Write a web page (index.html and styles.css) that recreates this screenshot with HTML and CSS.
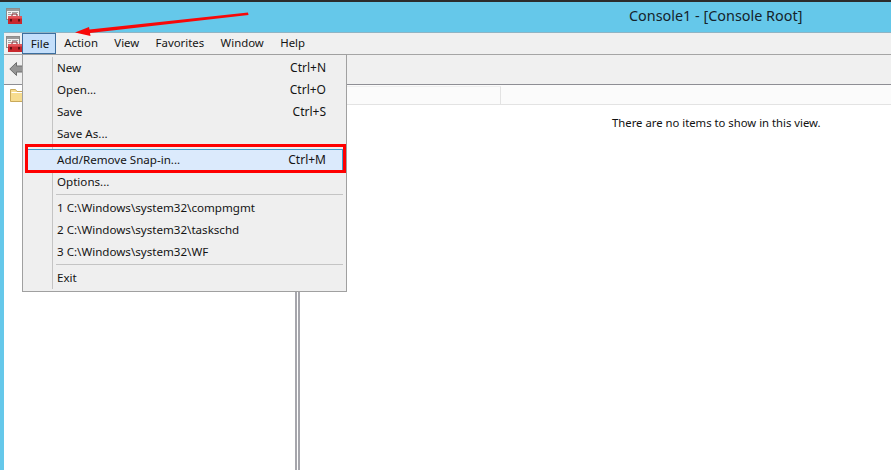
FILE: index.html
```html
<!DOCTYPE html>
<html lang="en">
<head>
<meta charset="utf-8">
<title>Console1 - [Console Root]</title>
<link rel="stylesheet" href="styles.css">
</head>
<body>
<svg width="0" height="0" class="defs">
  <symbol id="mmc" viewBox="0 0 16 16">
    <rect x="0.5" y="0.5" width="13" height="11" fill="#f4f4f4" stroke="#8b8b8b"/>
    <rect x="1" y="1" width="12" height="2" fill="#9a9a9a"/>
    <path d="M2 4.500h3M6 4.500h6M2 6.500h3" stroke="#a5a5a5"/>
    <path d="M6 8V6h5v2" fill="none" stroke="#7d1f24"/>
    <rect x="2" y="8" width="14" height="8" fill="#c8282e"/>
    <rect x="2" y="8" width="14" height="2.500" fill="#e2555a"/>
    <rect x="4" y="11" width="2" height="2.500" fill="#5f1114"/>
    <rect x="12" y="11" width="2" height="2.500" fill="#5f1114"/>
  </symbol>
</svg>
<div class="window">
  <header class="titlebar">
    <svg class="app-icon"><use href="#mmc"/></svg>
    <span class="title">Console1 - [Console Root]</span>
  </header>
  <div class="main">
    <nav class="menubar">
      <svg class="app-icon"><use href="#mmc"/></svg>
      <span class="menu-item active">File</span>
      <span class="menu-item">Action</span>
      <span class="menu-item">View</span>
      <span class="menu-item">Favorites</span>
      <span class="menu-item">Window</span>
      <span class="menu-item">Help</span>
    </nav>
    <div class="toolbar">
      <svg class="back" width="14" height="14" viewBox="0 0 14 14"><path d="M7.500 .5 .8 7l6.700 6.500V10H14V4H7.500z" fill="#959595" stroke="#6e6e6e"/></svg>
    </div>
    <div class="panes">
      <div class="tree">
        <svg width="14" height="14" viewBox="0 0 14 14"><path d="M.5 13.500V1.500h5l1.500 2h6.500v10z" fill="#f7dc8f" stroke="#c9a95a"/><path d="M1.500 4.500h11" stroke="#fff"/></svg>
      </div>
      <div class="divider"></div>
      <div class="content">
        <div class="tabstrip"><div class="tab"></div></div>
        <p class="empty">There are no items to show in this view.</p>
      </div>
    </div>
  </div>
</div>
<div class="menu">
  <div class="row"><span>New</span><span class="key">Ctrl+N</span></div>
  <div class="row"><span>Open...</span><span class="key">Ctrl+O</span></div>
  <div class="row"><span>Save</span><span class="key">Ctrl+S</span></div>
  <div class="row"><span>Save As...</span></div>
  <div class="sep"></div>
  <div class="row selected"><span>Add/Remove Snap-in...</span><span class="key">Ctrl+M</span></div>
  <div class="row"><span>Options...</span></div>
  <div class="sep"></div>
  <div class="row"><span>1 C:\Windows\system32\compmgmt</span></div>
  <div class="row"><span>2 C:\Windows\system32\taskschd</span></div>
  <div class="row"><span>3 C:\Windows\system32\WF</span></div>
  <div class="sep"></div>
  <div class="row"><span>Exit</span></div>
</div>
<div class="callout"></div>
<svg class="arrow" width="891" height="60" viewBox="0 0 891 60"><path d="M248 12.500 248.500 15 90 33 90.500 36 75 32.500 89 27 89.500 29.500z" fill="#f80808"/></svg>
</body>
</html>
```
FILE: styles.css
```css
* { box-sizing: border-box; }
html, body { margin: 0; height: 100%; }
body {
  width: 891px;
  height: 470px;
  overflow: hidden;
  position: relative;
  background: #fff;
  font-family: "Noto Sans", "Open Sans", sans-serif;
  font-size: 11.6px;
  color: #111;
}
.defs { position: absolute; }
.window {
  height: 470px;
  display: flex;
  flex-direction: column;
  border-top: 2px solid #2c2c2c;
  background: #65c8ea;
}
.titlebar {
  height: 30px;
  flex: none;
  display: flex;
  align-items: center;
  padding: 0 0 2px 6px;
  position: relative;
}
.app-icon { width: 16px; height: 16px; flex: none; }
.title {
  position: absolute;
  left: 629px;
  top: 3px;
  font-size: 14.4px;
  line-height: 22px;
  white-space: nowrap;
  color: #15232b;
}
.main {
  flex: 1;
  margin-left: 4px;
  display: flex;
  flex-direction: column;
  background: #fff;
  min-height: 0;
}
.menubar {
  height: 23px;
  flex: none;
  display: flex;
  align-items: center;
  padding-left: 2px;
  background: #f0f0f0;
  border-top: 1px solid #8fb4c4;
  border-bottom: 1px solid #a5a5a5;
}
.menu-item {
  height: 21px;
  line-height: 20px;
  padding: 0 8.2px;
  font-size: 11.4px;
  color: #151515;
  white-space: nowrap;
}
.menu-item.active {
  background: #c4dffb;
  border: 1px solid #3c6e9e;
  line-height: 19px;
  width: 34px;
  padding: 0 0 0 2px;
  font-size: 11.6px;
  text-align: center;
}
.toolbar {
  height: 30px;
  flex: none;
  display: flex;
  align-items: center;
  padding: 0 0 2px 5px;
  background: #f0f0f0;
  border-bottom: 1px solid #8e8e94;
}
.panes { flex: 1; display: flex; min-height: 0; }
.tree { width: 291px; flex: none; padding: 3px 0 0 6px; }
.divider {
  width: 5px;
  flex: none;
  border-left: 2px solid #a6a6ac;
  border-right: 2px solid #a6a6ac;
}
.content { flex: 1; min-width: 0; }
.tabstrip {
  height: 20px;
  background: #fbfbfb;
  border-bottom: 1px solid #e3e3e3;
  padding-top: 1px;
}
.tab {
  width: 201px;
  height: 18px;
  border-top: 1px solid #efefef;
  border-right: 1px solid #e3e3e3;
}
.empty {
  margin: 9px 0 0 312px;
  font-size: 11.3px;
  line-height: 18px;
  white-space: nowrap;
  color: #111;
}
.menu {
  position: absolute;
  left: 22px;
  top: 54px;
  width: 325px;
  height: 238px;
  padding: 2px 3px 0 3px;
  background: #efefef;
  border: 1px solid #a0a0a0;
  background-image: linear-gradient(#c4c4c4, #c4c4c4);
  background-repeat: no-repeat;
  background-size: 1px 232px;
  background-position: 29px 2px;
}
.row {
  height: 22px;
  display: flex;
  justify-content: space-between;
  align-items: center;
  padding: 0 17px 2px 31px;
  white-space: nowrap;
  color: #141414;
}
.key { font-size: 12px; text-align: right; }
.selected {
  background: #dbeafc;
  border: 1px solid #3f9ccc;
  padding: 0 16px 2px 30px;
}
.sep {
  height: 4px;
  margin: 0 0 0 30px;
  background: linear-gradient(#c4c4c4, #c4c4c4) no-repeat 0 1px / 100% 1px;
}
.callout {
  position: absolute;
  left: 25px;
  top: 144px;
  width: 321px;
  height: 29px;
  border: 3px solid #ff0000;
}
.arrow { position: absolute; left: 0; top: 0; pointer-events: none; }
```
